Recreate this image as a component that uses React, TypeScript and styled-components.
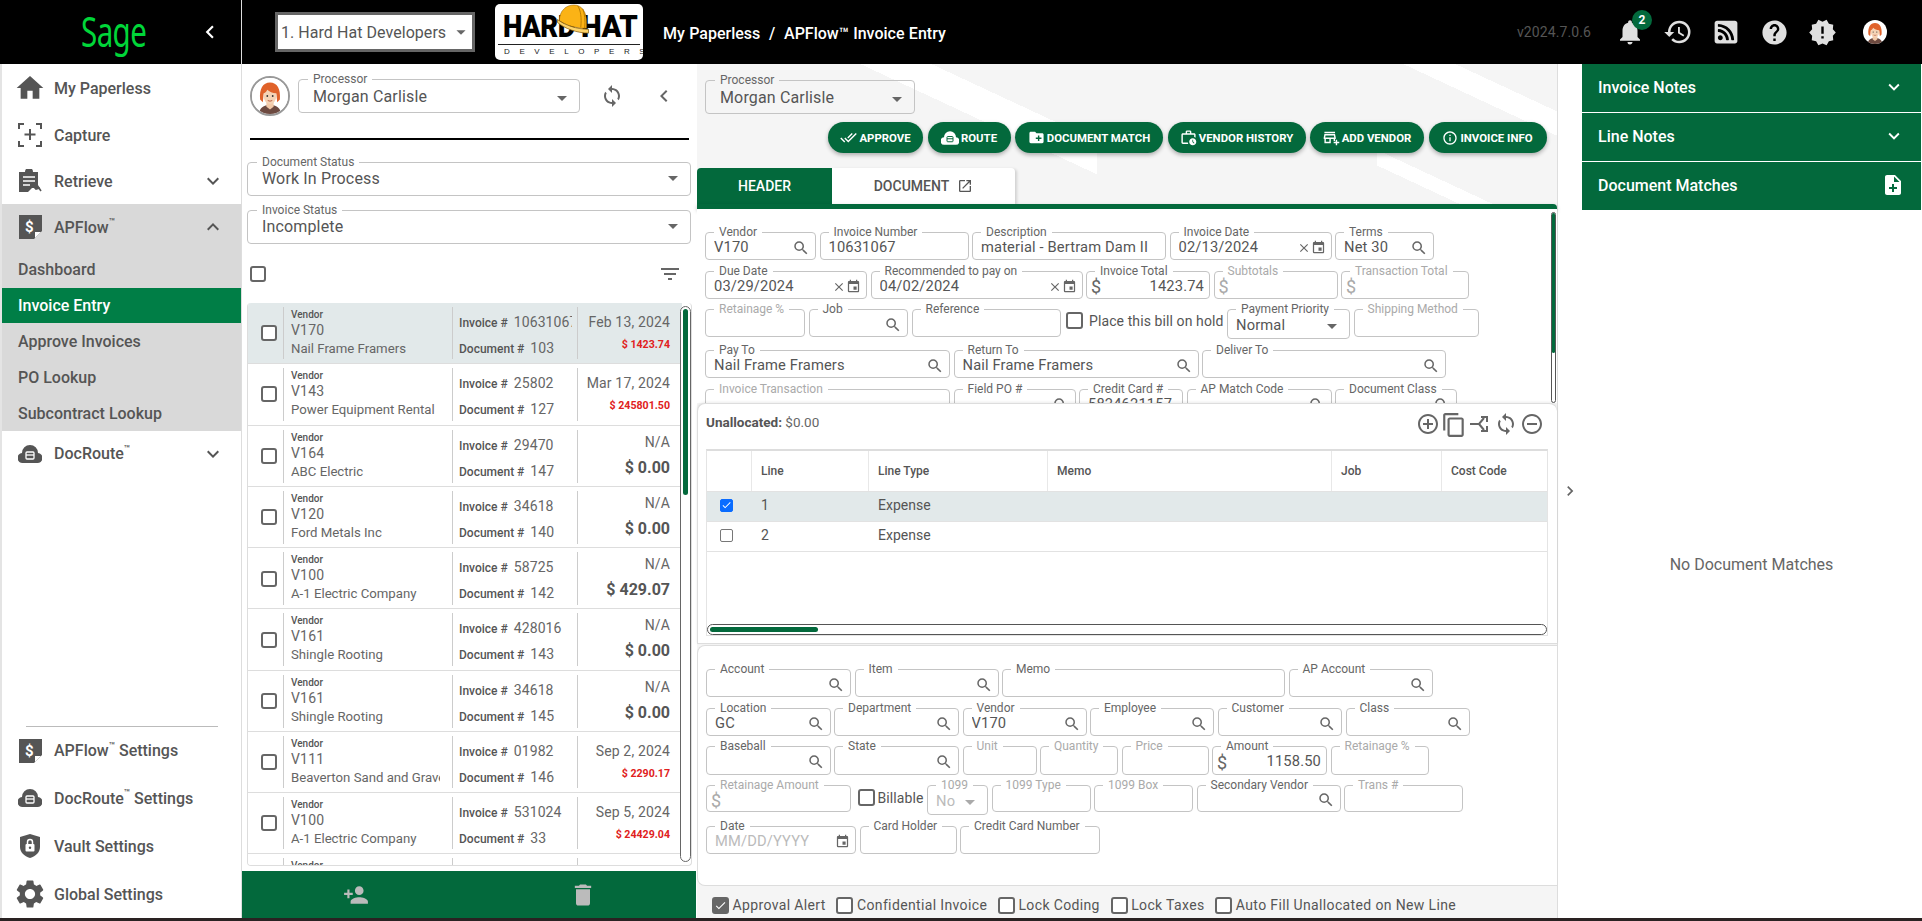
import React from "react";
import styled, { createGlobalStyle } from "styled-components";
import {
  MdHome, MdExpandMore, MdExpandLess, MdChevronLeft, MdChevronRight, MdArrowDropDown, MdSync, MdFilterList,
  MdSearch, MdClose, MdEvent, MdCheck, MdNotifications, MdRestore, MdHelp, MdNewReleases, MdNoteAdd,
  MdDoneAll, MdCreateNewFolder, MdOutlineWorkHistory, MdOutlineAddBusiness, MdInfoOutline, MdOpenInNew,
  MdAddCircleOutline, MdRemoveCircleOutline, MdOutlineContentCopy, MdDelete, MdPersonAddAlt1, MdSettings,
} from "react-icons/md";
import { FaRssSquare } from "react-icons/fa";

const GREEN = "#03693c";

const Global = createGlobalStyle`
  html, body { margin: 0; padding: 0; height: 100%; background: #2a2222; overflow: hidden; }
  * { box-sizing: border-box; }
  body { font-family: Roboto, "Liberation Sans", sans-serif; color: #555; }
`;

const Page = styled.div`
  width: 1922px; height: 918px; display: flex; flex-direction: column; background: #fff; overflow: hidden;
`;
const TopBar = styled.header`
  height: 64px; flex: none; background: #000; display: flex; align-items: center;
`;
const BrandCell = styled.div`
  width: 242px; height: 64px; flex: none; display: flex; align-items: center; border-right: 1px solid #ddd; position: relative;
  padding-left: 81px; color: #fff;
`;
const SageMark = styled.span`
  font-family: "Noto Sans", sans-serif; font-size: 41px; line-height: 44px; color: #00d639; letter-spacing: -0.8px; margin-top: -3px;
  transform: scaleX(0.72); transform-origin: left center;
`;
const BrandChevron = styled.span`
  display: flex; margin-left: 25px; color: #fff;
`;
const CompanySelect = styled.div`
  margin-left: 33px; width: 200px; height: 40px; background: #fff; border: 3px solid #666; display: flex; align-items: center;
  padding-left: 3px; font-size: 16px; color: #555; white-space: nowrap; justify-content: space-between; letter-spacing: .05px;
`;
const LogoCard = styled.div`
  position: relative; margin-left: 20px; width: 148px; height: 56px; background: #fff; border-radius: 5px; overflow: hidden; flex: none;
`;
const LogoWord = styled.div`
  display: flex; padding: 8px 0 0 8px; font-weight: 900; font-size: 32px; line-height: 29px; color: #000; height: 37px;
`;
const LogoPart = styled.span<{ $w: number; $sx: number }>`
  display: inline-block; width: ${p => p.$w}px; transform: scaleX(${p => p.$sx}); transform-origin: left top; white-space: nowrap;
  letter-spacing: -0.6px;
`;
const LogoRule = styled.div`
  height: 1px; background: #222; margin: 3px 3px 0;
`;
const LogoSub = styled.div`
  text-align: center; font-size: 8px; line-height: 14px; letter-spacing: 9.6px; color: #222; padding-left: 9px; font-family: "Liberation Sans", sans-serif;
`;
const LogoHat = styled.svg`
  position: absolute; left: 61px; top: 0;
`;
const Crumbs = styled.div`
  margin-left: 20px; margin-top: 3px; color: #fff; font-size: 16px; font-weight: 500; white-space: nowrap; word-spacing: 0.4px;
`;
const TopRight = styled.div`
  margin-left: auto; display: flex; align-items: center; padding-right: 23px; color: #e0e0e0;
`;
const Version = styled.span`
  font-size: 14px; color: #555; margin-right: 15px; letter-spacing: .1px;
`;
const TopIcon = styled.span<{ $ml?: number }>`
  position: relative; width: 48px; height: 48px; margin-left: ${p => p.$ml ?? 0}px; display: flex; align-items: center; justify-content: center; color: #e0e0e0;
`;
const Badge = styled.span`
  position: absolute; left: 26px; top: 2px; width: 20px; height: 20px; border-radius: 50%; background: ${GREEN}; color: #fff;
  font-size: 12px; font-weight: 700; display: flex; align-items: center; justify-content: center;
`;

const Body = styled.div`
  flex: 1; min-height: 0; display: flex;
`;

/* Sidebar */
const Side = styled.nav`
  width: 242px; flex: none; display: flex; flex-direction: column; border-left: 2px solid #e4e4e4; border-right: 1px solid #ddd; background: #fff;
`;
const NavItem = styled.div<{ $h?: number; $bg?: string }>`
  height: ${p => p.$h ?? 46}px; display: flex; align-items: center; padding: 0 16px 0 16px; gap: 12px; font-size: 16px; font-weight: 500; color: #555;
  background: ${p => p.$bg ?? "transparent"}; white-space: nowrap; flex: none;
  sup { font-size: 10px; line-height: 0; position: relative; top: -1px; vertical-align: super; }
`;
const NavIconBox = styled.span`
  width: 24px; height: 24px; flex: none; display: flex; align-items: center; justify-content: center; color: #555;
  svg { flex: none; }
`;
const NavEnd = styled.span`
  margin-left: auto; display: flex; color: #555;
`;
const SubGroup = styled.div`
  background: #d9d9d9; display: flex; flex-direction: column; padding-top: 0;
`;
const SubItem = styled.div<{ $active?: boolean; $h?: number }>`
  height: ${p => p.$h ?? 36}px; display: flex; align-items: center; padding-left: 16px; font-size: 16px; font-weight: 500;
  background: ${p => (p.$active ? "#007e46" : "transparent")}; color: ${p => (p.$active ? "#fff" : "#555")};
`;
const SideBottom = styled.div`
  margin-top: auto; display: flex; flex-direction: column;
`;
const SideRule = styled.div`
  height: 1px; background: #bbb; margin: 0 23px 0 24px;
`;

/* Outlined field */
const Outlined = styled.fieldset<{ $w: number; $h?: number }>`
  margin: 0; padding: 0 5px 0 8px; width: ${p => p.$w}px; min-width: 0; height: ${p => p.$h ?? 34}px; flex: none;
  border: 1px solid #c4c4c4; border-radius: 4px; display: flex; align-items: center; position: relative;
  font-size: 14.7px; letter-spacing: .15px; color: #555;
`;
const Legend = styled.legend<{ $off?: boolean }>`
  margin-left: 0; padding: 0 5px; font-size: 12px; line-height: 12px; height: 12px; letter-spacing: 0; font-weight: 400; color: ${p => (p.$off ? "#aaa" : "#666")};
  white-space: nowrap;
`;
const Value = styled.span<{ $right?: boolean; $off?: boolean }>`
  flex: 1; min-width: 0; white-space: nowrap; overflow: hidden; margin-top: -4px; text-align: ${p => (p.$right ? "right" : "left")};
  color: ${p => (p.$off ? "#bbb" : "#555")};
`;
const Adorn = styled.span<{ $off?: boolean }>`
  display: flex; align-items: center; flex: none; margin-top: -2px; color: ${p => (p.$off ? "#aaa" : "#666")};
`;
const Money = styled.span<{ $off?: boolean }>`
  font-size: 18px; margin: -2px 0 0 -4px; color: ${p => (p.$off ? "#aaa" : "#666")}; flex: none;
`;

const SelectBox = styled.fieldset<{ $w: number }>`
  margin: 0; padding: 0 5px 0 14px; width: ${p => p.$w}px; height: 40px; border: 1px solid #c4c4c4; border-radius: 4px; flex: none;
  display: flex; align-items: center; font-size: 16px; color: #555; letter-spacing: .15px; min-width: 0;
`;
const SelectValue = styled.span<{ $dy?: number }>`
  flex: 1; margin-top: ${p => p.$dy ?? -1}px;
`;
const SelectLegend = styled.legend`
  margin-left: -5px; padding: 0 5px; font-size: 12px; line-height: 12px; height: 12px; color: #666; letter-spacing: 0;
`;

/* List column */
const ListCol = styled.section`
  width: 455px; flex: none; display: flex; flex-direction: column; background: #fff;
`;
const ProcRow = styled.div`
  display: flex; align-items: flex-start; padding: 9px 0 0 8px; height: 74px; border-bottom: 0;
`;
const AvatarRing = styled.span`
  width: 40px; height: 40px; border-radius: 50%; border: 2px solid #999; flex: none; margin: 3px 8px 0 0; overflow: hidden; display: flex; background: #fff;
`;
const ProcTools = styled.div`
  display: flex; align-items: center; height: 40px; margin-top: 3px; color: #666;
`;
const ToolBtn = styled.span<{ $w: number }>`
  width: ${p => p.$w}px; display: flex; justify-content: center;
`;
const BlackLine = styled.div`
  height: 2px; background: #000; margin: 0 8px 0 8px; flex: none;
`;
const StatusStack = styled.div`
  display: flex; flex-direction: column; gap: 8px; padding: 16px 0 0 5px; flex: none;
`;
const CheckRow = styled.div`
  display: flex; align-items: center; justify-content: space-between; padding: 0 15px 0 8px; height: 59px; flex: none; margin-top: 0;
`;
const Box = styled.span<{ $s?: number; $checked?: boolean; $blue?: boolean; $thin?: boolean }>`
  width: ${p => p.$s ?? 16}px; height: ${p => p.$s ?? 16}px; flex: none; border: ${p => (p.$thin ? 1 : 2)}px solid ${p => (p.$blue ? "#0a6cff" : p.$thin ? "#777" : "#666")};
  border-radius: ${p => (p.$thin ? 2 : 3)}px; background: ${p => (p.$blue ? "#0a6cff" : p.$checked ? "#666" : "#fff")};
  display: inline-flex; align-items: center; justify-content: center; color: #fff;
`;
const ListBox = styled.div`
  position: relative; margin-left: 5px; width: 445px; height: 563px; flex: none; border: 1px solid #ddd; border-top: 0; border-radius: 4px; overflow: hidden;
`;
const ListRow = styled.div<{ $sel?: boolean }>`
  height: 61.25px; width: 434px; display: grid; grid-template-columns: 35px 169px 125px 105px; padding: 4px 0; box-sizing: border-box;
  border-bottom: 1px solid #ddd; background: ${p => (p.$sel ? "#e2e9ea" : "#fff")}; flex: none; overflow: hidden;
`;
const CheckCell = styled.div`
  display: flex; align-items: center; justify-content: center; padding-left: 6px;
`;
const VendorCell = styled.div`
  border-left: 1px solid #ccc; padding: 1px 0 0 7px; overflow: hidden; white-space: nowrap;
`;
const VendorLabel = styled.div`
  font-size: 10px; line-height: 14px; font-weight: 500; color: #555;
`;
const VendorCode = styled.div`
  font-size: 14px; line-height: 17px; color: #666; letter-spacing: .2px;
`;
const VendorName = styled.div`
  font-size: 13.2px; line-height: 20px; color: #666; width: 149px; overflow: hidden; letter-spacing: 0;
`;
const InvoiceCell = styled.div`
  border-left: 1px solid #ccc; padding: 2px 5px 0 6px; overflow: hidden; white-space: nowrap;
`;
const InvoiceLine = styled.div`
  height: 26px; line-height: 26px; font-size: 12px; font-weight: 500; color: #555; overflow: hidden;
  b { font-size: 14px; font-weight: 400; color: #666; margin-left: 6px; letter-spacing: .1px; }
`;
const DateCell = styled.div<{ $na?: boolean }>`
  border-left: 1px solid #ccc; padding: ${p => (p.$na ? 1 : 4)}px 12px 0 0; text-align: right; white-space: nowrap;
`;
const DateText = styled.div`
  font-size: 14px; line-height: 22px; color: #666; letter-spacing: .15px;
`;
const AmountRed = styled.div`
  font-size: 10.6px; line-height: 24px; font-weight: 700; color: #e02020;
`;
const AmountBig = styled.div`
  font-size: 16px; line-height: 30px; font-weight: 700; color: #555;
`;
const VBar = styled.div`
  position: absolute; right: 0; top: 3px; bottom: 3px; width: 11px; border: 1.5px solid #666; border-radius: 6px; background: #fff;
`;
const VThumb = styled.div`
  margin: 2px auto 0; width: 5px; height: 186px; background: ${GREEN}; border-radius: 3px;
`;
const ListFoot = styled.div`
  margin-top: 5px; flex: 1; background: ${GREEN}; display: grid; grid-template-columns: 1fr 1fr; align-items: center; justify-items: center; color: #bbb; margin-right: 1px; padding: 0 0 0 0;
`;

/* Main */
const Main = styled.section`
  width: 860px; flex: none; display: flex; flex-direction: column;
  background-color: #f5f5f5;
  background-image:
    linear-gradient(205deg, transparent 43px, #fff 43px, #fff 65px, transparent 65px),
    linear-gradient(205deg, transparent 154px, #fff 154px, #fff 168px, transparent 168px),
    linear-gradient(205deg, transparent 70px, #fff 70px, #fff 100px, transparent 100px);
  background-size: 400px 100%, 180px 100%, 400px 100%;
  background-position: right top, right top, left top;
  background-repeat: no-repeat;
`;
const MainProc = styled.div`
  padding: 10px 0 0 8px; height: 50px; flex: none;
`;
const Actions = styled.div`
  margin-top: 8px; display: flex; justify-content: flex-end; gap: 4.5px; padding-right: 10.5px; height: 31px; flex: none;
`;
const ActionBtn = styled.button<{ $w: number }>`
  width: ${p => p.$w}px; height: 31px; border: 0; border-radius: 16px; background: ${GREEN}; color: #fff; font: 700 11.4px Roboto, sans-serif;
  display: flex; align-items: center; justify-content: center; gap: 2px; padding: 0; box-shadow: 0 2px 4px rgba(0,0,0,.3); white-space: nowrap;
`;
const Tabs = styled.div`
  margin-top: 15px; display: flex; height: 36px; flex: none;
`;
const Tab = styled.div<{ $active?: boolean; $w: number }>`
  width: ${p => p.$w}px; display: flex; align-items: center; justify-content: center; gap: 8px; font-size: 14px; font-weight: 500;
  background: ${p => (p.$active ? GREEN : "#fff")}; color: ${p => (p.$active ? "#fff" : "#555")};
  border-radius: ${p => (p.$active ? "4px 0 0 0" : "0 4px 0 0")}; box-shadow: ${p => (p.$active ? "none" : "2px 1px 3px rgba(0,0,0,.15)")};
`;
const GreenBar = styled.div`
  height: 5px; background: ${GREEN}; border-radius: 0 4px 0 0; flex: none; box-shadow: 0 2px 4px rgba(0,0,0,.25); position: relative;
`;
const HeaderForm = styled.div`
  height: 194px; flex: none; background: #fff; padding: 17px 0 0 8px; overflow: hidden; position: relative;
`;
const FormRow = styled.div<{ $mt?: number }>`
  display: flex; align-items: flex-start; gap: 3.5px; margin-top: ${p => p.$mt ?? 5}px;
`;
const InlineCheck = styled.label<{ $mt: number; $ml: number; $inner: number }>`
  display: flex; align-items: center; gap: ${p => p.$inner}px; margin: ${p => p.$mt}px 0 0 ${p => p.$ml}px; font-size: 14px; color: #555; white-space: nowrap; flex: none; letter-spacing: .1px;
`;
const FormScroll = styled.div`
  position: absolute; right: 1px; top: 3px; bottom: 0; width: 5px; border: 1px solid #555; border-radius: 3px; background: #fff;
`;
const FormThumb = styled.div`
  height: 140px; background: ${GREEN}; border-radius: 2px;
`;
const LinesPanel = styled.div`
  height: 241px; flex: none; background: #fff; border: 1px solid #ddd; border-radius: 8px 8px 0 0; padding: 0 8px 0 8px; border-right: 0; box-shadow: 0 -1px 3px rgba(0,0,0,.08); position: relative;
`;
const LinesTop = styled.div`
  height: 45px; display: flex; align-items: center; justify-content: space-between; padding: 0 4px 8px 0;
`;
const Unalloc = styled.div`
  font-size: 13.5px; color: #666; margin-top: -2px; b { font-weight: 700; color: #555; }
`;
const LineTools = styled.div`
  display: flex; gap: 0; color: #666; margin-top: 4px; margin-right: 0;
`;
const LineTool = styled.span`
  width: 26px; display: flex; justify-content: center;
`;
const Table = styled.div`
  width: 842px; border: 1px solid #e4e4e4; border-top: 2px solid #ddd; height: 187px; position: relative;
`;
const TRow = styled.div<{ $sel?: boolean; $h: number; $head?: boolean }>`
  height: ${p => p.$h}px; display: grid; grid-template-columns: 45px 117px 179px 284px 110px 105px; align-items: center;
  border-bottom: 1px solid #e2e2e2; background: ${p => (p.$sel ? "#e2e9ea" : "#fff")};
  font-size: ${p => (p.$head ? 12 : 14)}px; font-weight: ${p => (p.$head ? 500 : 400)}; color: #555; padding-bottom: ${p => (p.$head ? 0 : 3)}px;
`;
const TCell = styled.div<{ $head?: boolean }>`
  height: 100%; display: flex; align-items: center; padding-left: 9px; ${p => (p.$head ? "border-right: 1px solid #e8e8e8;" : "")}
`;
const TCheck = styled.div`
  display: flex; justify-content: center; padding-right: 7px;
`;
const HBar = styled.div`
  position: absolute; left: 0; right: 0; bottom: 0; height: 11px; border: 1.5px solid #555; border-radius: 6px; background: #fff; padding: 2px;
`;
const HThumb = styled.div`
  width: 108px; height: 100%; background: ${GREEN}; border-radius: 3px;
`;
const LowerForm = styled.div`
  margin-top: 1px; height: 241px; flex: none; background: #fff; border: 1px solid #ddd; border-right: 0; border-radius: 8px 0 0 8px; padding: 17px 0 0 8px;
`;
const Checks = styled.div`
  flex: 1; display: flex; align-items: center; padding: 6px 0 0 15px; gap: 10.8px;
`;
const CheckItem = styled.label`
  display: flex; align-items: center; gap: 3.5px; font-size: 14px; color: #555; white-space: nowrap; letter-spacing: .36px;
`;

/* Right */
const Strip = styled.div`
  width: 25px; flex: none; background: #fff; border-left: 1px solid #ddd; display: flex; align-items: center; justify-content: center; color: #666;
`;
const Notes = styled.aside`
  width: 339px; flex: none; display: flex; flex-direction: column; background: #fff;
`;
const NoteHead = styled.div`
  height: 48px; flex: none; background: ${GREEN}; color: #fff; font-size: 16px; font-weight: 500; display: flex; align-items: center; justify-content: space-between;
  padding: 0 16px 2px 16px; margin-bottom: 1px;
`;
const Empty = styled.div`
  flex: 1; display: flex; align-items: center; justify-content: center; color: #666; font-size: 16px;
`;
const TopAvatarRound = styled.span`
  width: 24px; height: 24px; border-radius: 50%; overflow: hidden; display: flex;
`;

const Face = ({ size = 36 }: { size?: number }) => (
  <svg width={size} height={size} viewBox="0 0 40 40">
    <rect width="40" height="40" fill="#fff" />
    <path d="M8 40c0-7 5-10 12-10s12 3 12 10z" fill="#6d4a40" />
    <path d="M16 26h8v6l-4 3-4-3z" fill="#f2c9a8" />
    <path d="M9 24C8 12 12 5 20 5s12 7 11 19l-3 3-1-10H13l-1 10z" fill="#e0622a" />
    <ellipse cx="20" cy="20" rx="7" ry="9" fill="#f5d3b5" />
    <path d="M13 17c1-6 5-8 8-8s6 3 6 8c-4 0-8-2-10-4-1 2-2 3-4 4z" fill="#e0622a" />
    <circle cx="17" cy="20" r="1" fill="#333" /><circle cx="23" cy="20" r="1" fill="#333" />
    <path d="M17.5 25q2.5 1.5 5 0" stroke="#b5533a" fill="none" />
  </svg>
);

const HatLogo = () => (
  <LogoCard>
    <LogoWord>
      <LogoPart $w={78} $sx={0.86}>HARD</LogoPart>
      <LogoPart $w={57} $sx={0.92}>HAT</LogoPart>
    </LogoWord>
    <LogoRule />
    <LogoSub>DEVELOPERS</LogoSub>
    <LogoHat width="34" height="33" viewBox="0 0 34 34">
      <path d="M3 17C3 7 10 1 18 1c8 0 13 7 13 18v6l-5 0C18 24 9 22 3 17z" fill="#fbb316" stroke="#8a5a00" strokeWidth=".5" />
      <path d="M1 16c8 6 20 10 32 10v4C21 30 8 25 1 19z" fill="#fdd36a" stroke="#7a5000" strokeWidth=".7" />
      <path d="M22 2c3 5 4 12 3 22M27 5c2 5 3 12 2 20" stroke="#b87a00" fill="none" strokeWidth="1" />
    </LogoHat>
  </LogoCard>
);

const DollarDoc = () => (
  <svg width="23" height="24" viewBox="0 0 23 24">
    <path d="M0 0h23v16l-8 8H0z" fill="#555" />
    <text x="6" y="17" fontSize="15" fontWeight="700" fontFamily="Roboto" fill="#fff">$</text>
    <path d="M16 17h6l-6 6z" fill="#fff" />
  </svg>
);
const CaptureIcon = () => (
  <svg width="24" height="24" viewBox="0 0 24 24" fill="none" stroke="#555" strokeWidth="2">
    <path d="M1 6V1h5M18 1h5v5M23 18v5h-5M6 23H1v-5M12 6v11M6.5 11.5h11" />
  </svg>
);
const RetrieveIcon = () => (
  <svg width="24" height="24" viewBox="0 0 24 24">
    <path d="M1 3h6a4 4 0 0 1 8 0h5v16h-6l-4 4H1z" fill="#555" />
    <path d="M5 8h12M5 12h12M5 16h7" stroke="#fff" strokeWidth="1.6" />
    <path d="M15 17l3 3 4-1M19 16l4 6" stroke="#555" strokeWidth="1.6" fill="none" />
  </svg>
);
const CloudIcon = ({ c = "#555", ink = "#fff", size = 24 }: { c?: string; ink?: string; size?: number }) => (
  <svg width={size} height={size} viewBox="0 0 24 24">
    <path d="M5 21a5 5 0 0 1-1-10 8 8 0 0 1 16 0 5 5 0 0 1-1 10z" fill={c} />
    <rect x="8" y="10" width="8" height="7" rx="1" fill="none" stroke={ink} strokeWidth="1.3" />
    <path d="M8 13h8" stroke={ink} strokeWidth="1.3" />
  </svg>
);
const ShieldIcon = () => (
  <svg width="24" height="24" viewBox="0 0 24 24">
    <path d="M12 0l10 3v10c0 5-4 9-10 11C6 22 2 18 2 13V3z" fill="#555" />
    <rect x="7.5" y="10" width="9" height="7.5" rx="1" fill="#fff" />
    <path d="M9.5 10V8a2.5 2.5 0 0 1 5 0v2" stroke="#fff" strokeWidth="1.5" fill="none" />
    <circle cx="12" cy="13.7" r="1.2" fill="#555" />
  </svg>
);
const SplitIcon = () => (
  <svg width="24" height="24" viewBox="0 0 24 24" fill="none" stroke="#666" strokeWidth="2">
    <path d="M2 12h9l5-6M11 12l5 6M13 5h6v5M13 19h6v-5" />
  </svg>
);

type F = { l: string; w: number; v?: string; k?: "search" | "date" | "money" | "select"; off?: boolean; ph?: boolean; h?: number };

const Field = ({ f }: { f: F }) => (
  <Outlined $w={f.w} $h={f.h}>
    <Legend $off={f.off}>{f.l}</Legend>
    {f.k === "money" && <Money $off={f.off}>$</Money>}
    <Value $right={f.k === "money"} $off={f.off || f.ph}>{f.v}</Value>
    {f.k === "search" && <Adorn><MdSearch size={18} /></Adorn>}
    {f.k === "date" && (
      <Adorn>
        {f.v && !f.ph ? <MdClose size={14} /> : null}
        <MdEvent size={15} />
      </Adorn>
    )}
    {f.k === "select" && <Adorn $off={f.off}><MdArrowDropDown size={24} /></Adorn>}
  </Outlined>
);

const rowsHeader: F[][] = [
  [
    { l: "Vendor", w: 111, v: "V170", k: "search" }, { l: "Invoice Number", w: 149, v: "10631067" },
    { l: "Description", w: 194, v: "material - Bertram Dam II" }, { l: "Invoice Date", w: 162, v: "02/13/2024", k: "date" },
    { l: "Terms", w: 99, v: "Net 30", k: "search" },
  ],
  [
    { l: "Due Date", w: 162, v: "03/29/2024", k: "date" }, { l: "Recommended to pay on", w: 212, v: "04/02/2024", k: "date" },
    { l: "Invoice Total", w: 124, v: "1423.74", k: "money" }, { l: "Subtotals", w: 124, k: "money", off: true },
    { l: "Transaction Total", w: 128, k: "money", off: true },
  ],
];
const rowsHeader4: F[] = [
  { l: "Pay To", w: 245, v: "Nail Frame Framers", k: "search" }, { l: "Return To", w: 245, v: "Nail Frame Framers", k: "search" },
  { l: "Deliver To", w: 244, k: "search" },
];
const rowsHeader5: F[] = [
  { l: "Invoice Transaction", w: 245, off: true }, { l: "Field PO #", w: 122, k: "search" }, { l: "Credit Card #", w: 104, v: "5824621157" },
  { l: "AP Match Code", w: 145, k: "search" }, { l: "Document Class", w: 122, k: "search" },
];
const rowsLower: F[][] = [
  [
    { l: "Account", w: 145, k: "search" }, { l: "Item", w: 144, k: "search" }, { l: "Memo", w: 283 }, { l: "AP Account", w: 144, k: "search" },
  ],
  [
    { l: "Location", w: 124.5, v: "GC", k: "search" }, { l: "Department", w: 125, k: "search" }, { l: "Vendor", w: 124, v: "V170", k: "search" },
    { l: "Employee", w: 124, k: "search" }, { l: "Customer", w: 124.5, k: "search" }, { l: "Class", w: 124, k: "search" },
  ],
  [
    { l: "Baseball", w: 124.5, k: "search", h: 35 }, { l: "State", w: 125, k: "search", h: 35 }, { l: "Unit", w: 74, off: true, h: 35 }, { l: "Quantity", w: 78, off: true, h: 35 },
    { l: "Price", w: 87, off: true, h: 35 }, { l: "Amount", w: 115, v: "1158.50", k: "money", h: 35 }, { l: "Retainage %", w: 98, off: true, h: 35 },
  ],
];
const rowE: F[] = [
  { l: "Date", w: 150, v: "MM/DD/YYYY", k: "date", ph: true }, { l: "Card Holder", w: 97 }, { l: "Credit Card Number", w: 140 },
];

const invoices = [
  { code: "V170", name: "Nail Frame Framers", inv: "10631067", doc: "103", date: "Feb 13, 2024", amt: "$ 1423.74", sel: true },
  { code: "V143", name: "Power Equipment Rental", inv: "25802", doc: "127", date: "Mar 17, 2024", amt: "$ 245801.50" },
  { code: "V164", name: "ABC Electric", inv: "29470", doc: "147", date: "N/A", amt: "$ 0.00" },
  { code: "V120", name: "Ford Metals Inc", inv: "34618", doc: "140", date: "N/A", amt: "$ 0.00" },
  { code: "V100", name: "A-1 Electric Company", inv: "58725", doc: "142", date: "N/A", amt: "$ 429.07" },
  { code: "V161", name: "Shingle Rooting", inv: "428016", doc: "143", date: "N/A", amt: "$ 0.00" },
  { code: "V161", name: "Shingle Rooting", inv: "34618", doc: "145", date: "N/A", amt: "$ 0.00" },
  { code: "V111", name: "Beaverton Sand and Gravel", inv: "01982", doc: "146", date: "Sep 2, 2024", amt: "$ 2290.17" },
  { code: "V100", name: "A-1 Electric Company", inv: "531024", doc: "33", date: "Sep 5, 2024", amt: "$ 24429.04" },
  { code: "V100", name: "A-1 Electric Company", inv: "531025", doc: "34", date: "Sep 6, 2024", amt: "$ 1020.00" },
];

export default function App() {
  return (
    <>
      <Global />
      <Page>
        <TopBar>
          <BrandCell>
            <SageMark>Sage</SageMark>
            <BrandChevron><MdChevronLeft size={26} /></BrandChevron>
          </BrandCell>
          <CompanySelect>1. Hard Hat Developers<MdArrowDropDown size={22} color="#666" /></CompanySelect>
          <HatLogo />
          <Crumbs>My Paperless&nbsp; /&nbsp; APFlow™ Invoice Entry</Crumbs>
          <TopRight>
            <Version>v2024.7.0.6</Version>
            <TopIcon><MdNotifications size={30} /><Badge>2</Badge></TopIcon>
            <TopIcon><MdRestore size={30} /></TopIcon>
            <TopIcon><FaRssSquare size={26} /></TopIcon>
            <TopIcon><MdHelp size={29} /></TopIcon>
            <TopIcon><MdNewReleases size={29} /></TopIcon>
            <TopIcon $ml={5}><TopAvatarRound><Face size={24} /></TopAvatarRound></TopIcon>
          </TopRight>
        </TopBar>
        <Body>
          <Side>
            <NavItem $h={48}><NavIconBox><MdHome size={32} /></NavIconBox>My Paperless</NavItem>
            <NavItem $h={46}><NavIconBox><CaptureIcon /></NavIconBox>Capture</NavItem>
            <NavItem><NavIconBox><RetrieveIcon /></NavIconBox>Retrieve<NavEnd><MdExpandMore size={24} /></NavEnd></NavItem>
            <SubGroup>
              <NavItem><NavIconBox><DollarDoc /></NavIconBox><span>APFlow<sup>™</sup></span><NavEnd><MdExpandLess size={24} /></NavEnd></NavItem>
              <SubItem $h={38}>Dashboard</SubItem>
              <SubItem $active $h={35}>Invoice Entry</SubItem>
              <SubItem>Approve Invoices</SubItem>
              <SubItem>PO Lookup</SubItem>
              <SubItem>Subcontract Lookup</SubItem>
            </SubGroup>
            <NavItem $h={45}><NavIconBox><CloudIcon /></NavIconBox><span>DocRoute<sup>™</sup></span><NavEnd><MdExpandMore size={24} /></NavEnd></NavItem>
            <SideBottom>
              <SideRule />
              <NavItem $h={47}><NavIconBox><DollarDoc /></NavIconBox><span>APFlow<sup>™</sup> Settings</span></NavItem>
              <NavItem $h={48}><NavIconBox><CloudIcon /></NavIconBox><span>DocRoute<sup>™</sup> Settings</span></NavItem>
              <NavItem $h={48}><NavIconBox><ShieldIcon /></NavIconBox>Vault Settings</NavItem>
              <NavItem $h={48}><NavIconBox><MdSettings size={34} /></NavIconBox>Global Settings</NavItem>
            </SideBottom>
          </Side>

          <ListCol>
            <ProcRow>
              <AvatarRing><Face /></AvatarRing>
              <SelectBox $w={282}>
                <SelectLegend>Processor</SelectLegend>
                <SelectValue $dy={-5}>Morgan Carlisle</SelectValue>
                <Adorn><MdArrowDropDown size={24} /></Adorn>
              </SelectBox>
              <ProcTools>
                <ToolBtn $w={64}><MdSync size={24} /></ToolBtn>
                <ToolBtn $w={40}><MdChevronLeft size={24} /></ToolBtn>
              </ProcTools>
            </ProcRow>
            <BlackLine />
            <StatusStack>
              <SelectBox $w={444}>
                <SelectLegend>Document Status</SelectLegend>
                <SelectValue>Work In Process</SelectValue>
                <Adorn><MdArrowDropDown size={24} /></Adorn>
              </SelectBox>
              <SelectBox $w={444}>
                <SelectLegend>Invoice Status</SelectLegend>
                <SelectValue>Incomplete</SelectValue>
                <Adorn><MdArrowDropDown size={24} /></Adorn>
              </SelectBox>
            </StatusStack>
            <CheckRow>
              <Box />
              <MdFilterList size={24} color="#666" />
            </CheckRow>
            <ListBox>
              {invoices.map((r, i) => (
                <ListRow key={i} $sel={r.sel}>
                  <CheckCell><Box /></CheckCell>
                  <VendorCell>
                    <VendorLabel>Vendor</VendorLabel>
                    <VendorCode>{r.code}</VendorCode>
                    <VendorName>{r.name}</VendorName>
                  </VendorCell>
                  <InvoiceCell>
                    <InvoiceLine>Invoice #<b>{r.inv}</b></InvoiceLine>
                    <InvoiceLine>Document #<b>{r.doc}</b></InvoiceLine>
                  </InvoiceCell>
                  <DateCell $na={r.date === "N/A"}>
                    <DateText>{r.date}</DateText>
                    {r.date === "N/A" ? <AmountBig>{r.amt}</AmountBig> : <AmountRed>{r.amt}</AmountRed>}
                  </DateCell>
                </ListRow>
              ))}
              <VBar><VThumb /></VBar>
            </ListBox>
            <ListFoot>
              <MdPersonAddAlt1 size={26} style={{ transform: "scaleX(-1)" }} />
              <MdDelete size={28} />
            </ListFoot>
          </ListCol>

          <Main>
            <MainProc>
              <SelectBox $w={210}>
                <SelectLegend>Processor</SelectLegend>
                <SelectValue $dy={-5}>Morgan Carlisle</SelectValue>
                <Adorn><MdArrowDropDown size={24} /></Adorn>
              </SelectBox>
            </MainProc>
            <Actions>
              <ActionBtn $w={95}><MdDoneAll size={17} />APPROVE</ActionBtn>
              <ActionBtn $w={83}><CloudIcon c="#fff" ink={GREEN} size={18} />ROUTE</ActionBtn>
              <ActionBtn $w={148}><MdCreateNewFolder size={17} />DOCUMENT MATCH</ActionBtn>
              <ActionBtn $w={138}><MdOutlineWorkHistory size={17} />VENDOR HISTORY</ActionBtn>
              <ActionBtn $w={114}><MdOutlineAddBusiness size={17} />ADD VENDOR</ActionBtn>
              <ActionBtn $w={118}><MdInfoOutline size={16} />INVOICE INFO</ActionBtn>
            </Actions>
            <Tabs>
              <Tab $active $w={135}>HEADER</Tab>
              <Tab $w={183}>DOCUMENT <MdOpenInNew size={16} /></Tab>
            </Tabs>
            <GreenBar />
            <HeaderForm>
              <FormRow $mt={0}>{rowsHeader[0].map(f => <Field key={f.l} f={f} />)}</FormRow>
              <FormRow>{rowsHeader[1].map(f => <Field key={f.l} f={f} />)}</FormRow>
              <FormRow $mt={4}>
                <Field f={{ l: "Retainage %", w: 100, off: true }} />
                <Field f={{ l: "Job", w: 99.5, k: "search" }} />
                <Field f={{ l: "Reference", w: 149 }} />
                <InlineCheck $mt={9} $ml={2} $inner={6}><Box $s={17} />Place this bill on hold</InlineCheck>
                <Field f={{ l: "Payment Priority", w: 123, v: "Normal", k: "select", h: 36 }} />
                <Field f={{ l: "Shipping Method", w: 125, off: true }} />
              </FormRow>
              <FormRow>{rowsHeader4.map(f => <Field key={f.l} f={f} />)}</FormRow>
              <FormRow>{rowsHeader5.map(f => <Field key={f.l} f={f} />)}</FormRow>
              <FormScroll><FormThumb /></FormScroll>
            </HeaderForm>
            <LinesPanel>
              <LinesTop>
                <Unalloc><b>Unallocated:</b> $0.00</Unalloc>
                <LineTools>
                  <LineTool><MdAddCircleOutline size={24} /></LineTool>
                  <LineTool><MdOutlineContentCopy size={26} /></LineTool>
                  <LineTool><SplitIcon /></LineTool>
                  <LineTool><MdSync size={24} /></LineTool>
                  <LineTool><MdRemoveCircleOutline size={24} /></LineTool>
                </LineTools>
              </LinesTop>
              <Table>
                <TRow $head $h={41}>
                  <TCell $head />
                  <TCell $head>Line</TCell>
                  <TCell $head>Line Type</TCell>
                  <TCell $head>Memo</TCell>
                  <TCell $head>Job</TCell>
                  <TCell>Cost Code</TCell>
                </TRow>
                <TRow $sel $h={30}>
                  <TCheck><Box $s={13} $blue $thin><MdCheck size={12} /></Box></TCheck>
                  <TCell>1</TCell><TCell>Expense</TCell>
                </TRow>
                <TRow $h={30}>
                  <TCheck><Box $s={13} $thin /></TCheck>
                  <TCell>2</TCell><TCell>Expense</TCell>
                </TRow>
                <HBar><HThumb /></HBar>
              </Table>
            </LinesPanel>
            <LowerForm>
              <FormRow $mt={0}>{rowsLower[0].map(f => <Field key={f.l} f={f} />)}</FormRow>
              <FormRow>{rowsLower[1].map(f => <Field key={f.l} f={f} />)}</FormRow>
              <FormRow $mt={4}>{rowsLower[2].map(f => <Field key={f.l} f={f} />)}</FormRow>
              <FormRow $mt={4}>
                <Field f={{ l: "Retainage Amount", w: 145, k: "money", off: true, h: 33 }} />
                <InlineCheck $mt={10} $ml={3} $inner={3}><Box $s={17} />Billable</InlineCheck>
                <Field f={{ l: "1099", w: 61, v: "No", k: "select", off: true, h: 36 }} />
                <Field f={{ l: "1099 Type", w: 99, off: true, h: 33 }} />
                <Field f={{ l: "1099 Box", w: 99, off: true, h: 33 }} />
                <Field f={{ l: "Secondary Vendor", w: 144, k: "search", h: 33 }} />
                <Field f={{ l: "Trans #", w: 119, off: true, h: 33 }} />
              </FormRow>
              <FormRow>{rowE.map(f => <Field key={f.l} f={f} />)}</FormRow>
            </LowerForm>
            <Checks>
              <CheckItem><Box $s={17} $checked><MdCheck size={15} /></Box>Approval Alert</CheckItem>
              <CheckItem><Box $s={17} />Confidential Invoice</CheckItem>
              <CheckItem><Box $s={17} />Lock Coding</CheckItem>
              <CheckItem><Box $s={17} />Lock Taxes</CheckItem>
              <CheckItem><Box $s={17} />Auto Fill Unallocated on New Line</CheckItem>
            </Checks>
          </Main>

          <Strip><MdChevronRight size={20} /></Strip>

          <Notes>
            <NoteHead>Invoice Notes<MdExpandMore size={22} /></NoteHead>
            <NoteHead>Line Notes<MdExpandMore size={22} /></NoteHead>
            <NoteHead>Document Matches<MdNoteAdd size={24} /></NoteHead>
            <Empty>No Document Matches</Empty>
          </Notes>
        </Body>
      </Page>
    </>
  );
}
